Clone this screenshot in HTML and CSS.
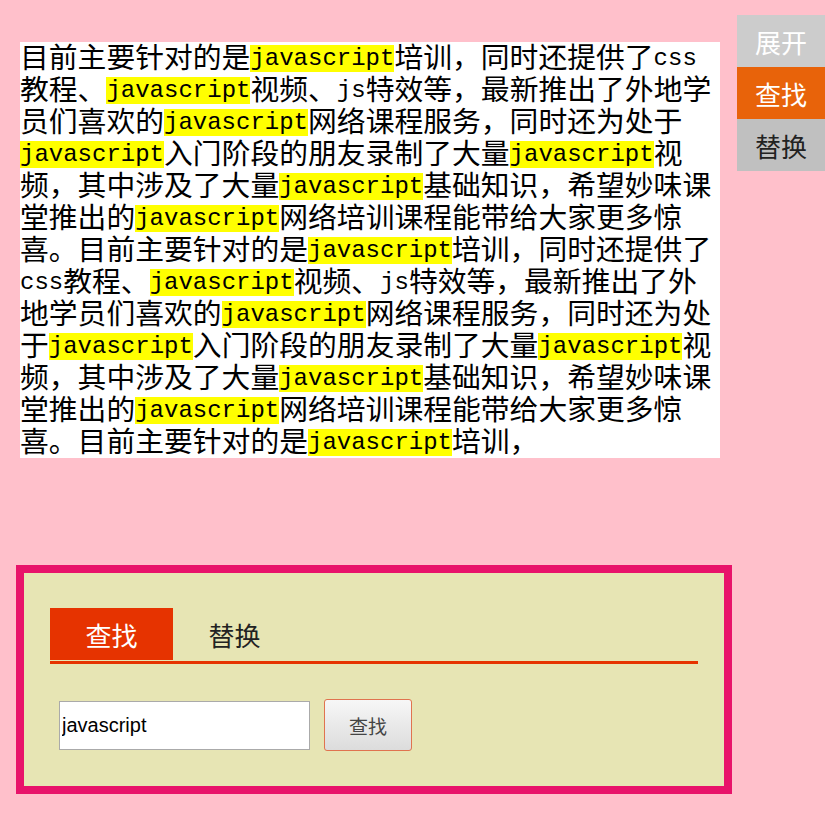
FILE: index.html
```html
<!DOCTYPE html>
<html lang="zh-CN">
<head>
<meta charset="utf-8">
<title>查找替换</title>
<link rel="stylesheet" href="styles.css">
</head>
<body>
<div class="page">
  <main class="main">
    <p class="article">目前主要针对的是<span class="hl">javascript</span>培训，同时还提供了<span class="en">css</span>教程、<span class="hl">javascript</span>视频、<span class="en">js</span>特效等，最新推出了外地学员们喜欢的<span class="hl">javascript</span>网络课程服务，同时还为处于<span class="hl">javascript</span>入门阶段的朋友录制了大量<span class="hl">javascript</span>视频，其中涉及了大量<span class="hl">javascript</span>基础知识，希望妙味课堂推出的<span class="hl">javascript</span>网络培训课程能带给大家更多惊喜。目前主要针对的是<span class="hl">javascript</span>培训，同时还提供了<span class="en">css</span>教程、<span class="hl">javascript</span>视频、<span class="en">js</span>特效等，最新推出了外地学员们喜欢的<span class="hl">javascript</span>网络课程服务，同时还为处于<span class="hl">javascript</span>入门阶段的朋友录制了大量<span class="hl">javascript</span>视频，其中涉及了大量<span class="hl">javascript</span>基础知识，希望妙味课堂推出的<span class="hl">javascript</span>网络培训课程能带给大家更多惊喜。目前主要针对的是<span class="hl">javascript</span>培训，</p>

    <section class="panel">
      <div class="tabs">
        <div class="tab tab-active">查找</div>
        <div class="tab">替换</div>
      </div>
      <div class="form-row">
        <input class="search-input" type="text" value="javascript">
        <button class="search-btn" type="button">查找</button>
      </div>
    </section>
  </main>

  <aside class="side">
    <div class="side-btn side-expand">展开</div>
    <div class="side-btn side-find">查找</div>
    <div class="side-btn side-replace">替换</div>
  </aside>
</div>
</body>
</html>
```

FILE: styles.css
```css
html, body {
  margin: 0;
  padding: 0;
}

body {
  background: #ffc0cb;
  font-family: "Noto Sans CJK SC", sans-serif;
  color: #000;
  text-spacing-trim: space-all;
  text-autospace: no-autospace;
}

.page {
  display: flex;
  align-items: flex-start;
  padding: 15px 11px 0 16px;
}

.main {
  width: 716px;
  padding-top: 27px;
}

.article {
  margin: 0 0 0 4px;
  width: 700px;
  background: #fff;
  font-family: "Liberation Serif", "Noto Sans CJK SC", serif;
  font-size: 28.8px;
  line-height: 32px;
}

.hl,
.en {
  font-family: "Liberation Mono", monospace;
  font-size: 24px;
  line-height: 1;
  vertical-align: 3px;
}

.hl {
  background: #ffff00;
}

.panel {
  margin-top: 107px;
  border: 8px solid #e8136a;
  background: #e7e5b4;
  padding: 35px 26px 35px 26px;
}

.tabs {
  display: flex;
  border-bottom: 3px solid #e63300;
  padding-bottom: 1px;
}

.tab {
  width: 123px;
  height: 52px;
  display: flex;
  align-items: center;
  justify-content: center;
  font-size: 26px;
  color: #222;
}

.tab-active {
  background: #e63300;
  color: #fff;
}

.form-row {
  display: flex;
  align-items: center;
  margin-top: 35px;
  padding-left: 9px;
}

.search-input {
  box-sizing: border-box;
  width: 251px;
  height: 49px;
  margin: 0;
  padding: 0 2px;
  border: 1px solid #aaaaaa;
  background: #fff;
  font-family: "Liberation Sans", Arial, sans-serif;
  font-size: 20px;
  color: #000;
  outline: none;
}

.search-btn {
  box-sizing: border-box;
  width: 88px;
  height: 52px;
  margin: 0 0 0 14px;
  padding: 0;
  border: 1px solid #e0734f;
  border-radius: 3px;
  background: linear-gradient(#f7f7f7, #dcdcdc);
  font-family: "Noto Sans CJK SC", sans-serif;
  font-size: 19px;
  color: #444;
}

.side {
  margin-left: auto;
  width: 88px;
  display: flex;
  flex-direction: column;
}

.side-btn {
  height: 52px;
  display: flex;
  align-items: center;
  justify-content: center;
  font-size: 26px;
}

.side-expand {
  background: #cccccc;
  color: #fff;
}

.side-find {
  background: #e8630a;
  color: #fff;
}

.side-replace {
  background: #c0c0c0;
  color: #222;
}
```
